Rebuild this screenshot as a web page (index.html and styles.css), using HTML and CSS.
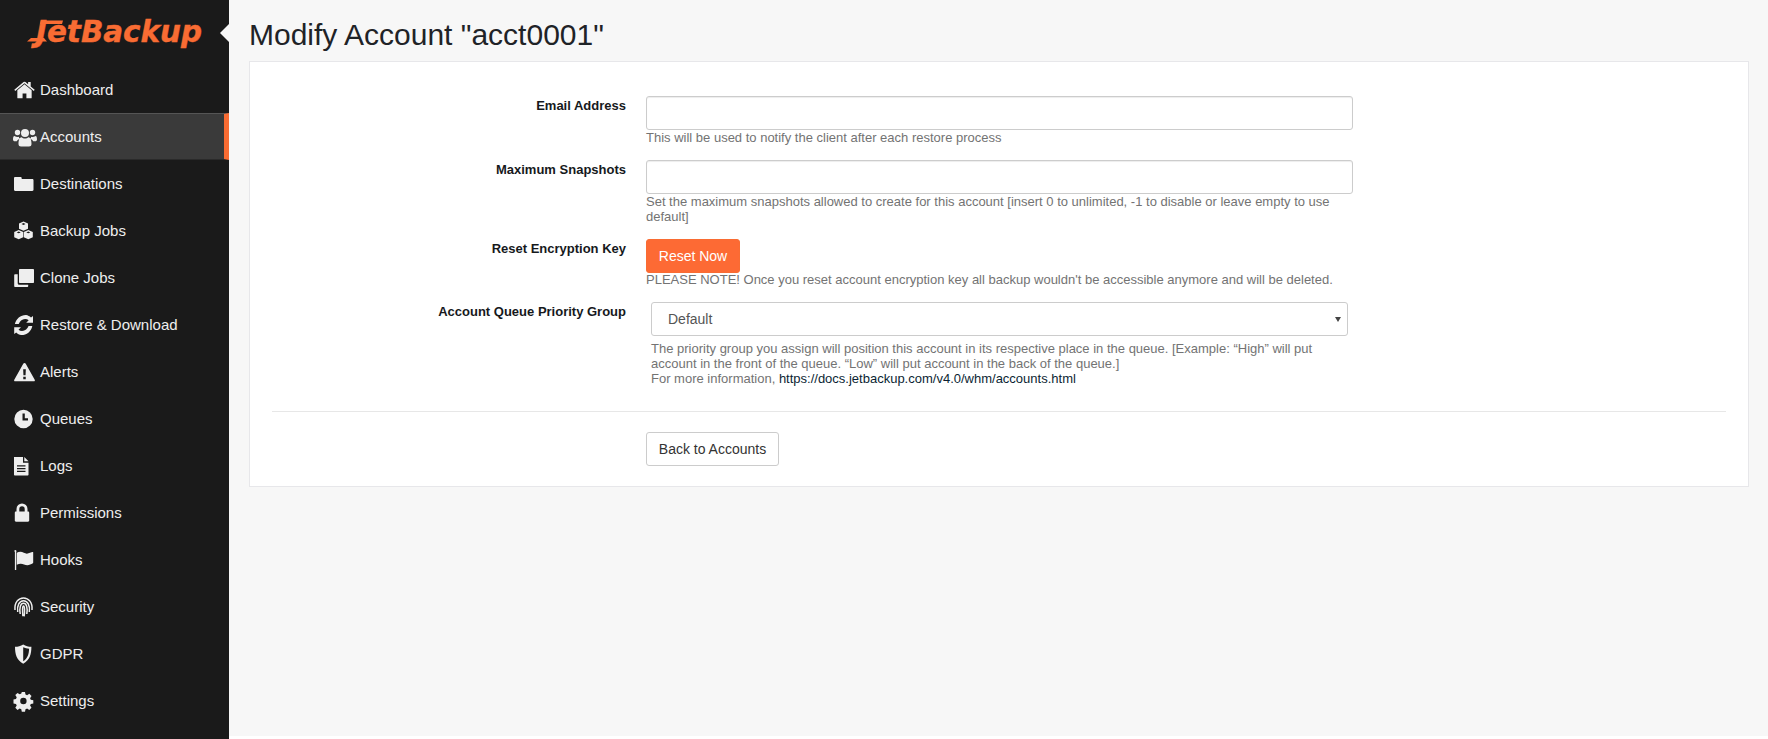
FILE: index.html
```html
<!DOCTYPE html>
<html lang="en">
<head>
<meta charset="utf-8">
<title>Modify Account</title>
<link rel="stylesheet" href="styles.css">
</head>
<body>
<div class="layout">
  <aside class="sidebar">
    <div class="brand">
      <svg class="logo" viewBox="0 0 176 30">
        <polygon class="logo-mark" points="0,21.500 20,21.500 17,18 4,18"/>
        <polygon class="logo-mark" points="14,.5 36,.5 35,4 13,4"/>
        <text class="logo-text" x="9" y="21.500" textLength="166" lengthAdjust="spacingAndGlyphs">JetBackup</text>
      </svg>
      <span class="notch"></span>
    </div>
    <nav class="nav">
      <a class="item"><svg class="ico ico-21" viewBox="0 0 22 20"><path d="M11 4 3.500 10.200V18a.7.7 0 0 0 .7.7H9v-5h4v5h4.800a.7.700 0 0 0 .7-.7v-7.800zM.3 9.800l1 1.200L11 3l9.700 8 1-1.200L17.500 6.300V1.500h-2.700v2.600L12 1.700a1.600 1.600 0 0 0-2 0z"/></svg>Dashboard</a>
      <a class="item active"><svg class="ico ico-24" viewBox="0 0 24 20"><circle cx="12" cy="6" r="4"/><circle cx="4.500" cy="5.500" r="2.700"/><circle cx="19.500" cy="5.500" r="2.700"/><path d="M5.500 17c0-4.500 1.500-6.700 3-6.700 1 .8 2.100 1.300 3.500 1.300s2.500-.5 3.500-1.300c1.500 0 3 2.200 3 6.700 0 1.700-1 2.500-2.500 2.500h-8c-1.500 0-2.500-.8-2.500-2.500zM0 12.500C0 10 .6 9 1.500 9c1 .6 2 .9 3 .9.500 0 1-.1 1.500-.2-.1 1 .3 1.600.9 2.200C5.300 12 4.300 13 3.800 14.300H1.800C.8 14.300 0 13.700 0 12.500zM24 12.500c0-2.500-.6-3.500-1.500-3.500-1 .6-2 .9-3 .9-.5 0-1-.1-1.500-.2.100 1-.3 1.600-.9 2.200 1.600.1 2.600 1.100 3.100 2.400h2c1 0 1.800-.6 1.800-1.800z"/></svg>Accounts</a>
      <a class="item"><svg class="ico" viewBox="0 0 20 20"><path d="M0 4.200C0 3.500.5 3 1.200 3h5.300c.7 0 1.200.5 1.200 1.200V5h10.600c.7 0 1.200.5 1.200 1.200v9.600c0 .7-.5 1.200-1.200 1.200H1.200C.5 17 0 16.500 0 15.800z"/></svg>Destinations</a>
      <a class="item"><svg class="ico" viewBox="0 0 20 20"><path fill-rule="evenodd" d="M9.500 .5 14 2.500V7.700L9.500 9.700 5 7.700V2.500zM7.500 3l2 .9 2-.9-2-.9zM4.700 9 9.200 11V16.300L4.700 18.300 .2 16.300V11zM2.700 11.400l2 .9 2-.9-2-.9zM14.300 9 18.800 11V16.300L14.300 18.300 9.800 16.300V11zM12.300 11.400l2 .9 2-.9-2-.9z"/></svg>Backup Jobs</a>
      <a class="item"><svg class="ico" viewBox="0 0 20 20"><path d="M5 1.800C5 1.300 5.300 1 5.800 1h13.400c.5 0 .8.300.8.800v12.400c0 .5-.3.800-.8.800H5.800c-.5 0-.8-.3-.8-.8z"/><path d="M.2 7C.2 6.500.5 6.200 1 6.200H3.700v9c0 .8.700 1.500 1.500 1.500h9v1.500c0 .5-.3.800-.8.800H1c-.5 0-.8-.3-.8-.8z"/></svg>Clone Jobs</a>
      <a class="item"><svg class="ico" viewBox="0 0 20 20"><path d="M19 1v6.800h-6.800l2.500-2.500C12.300 3.200 8.300 3.700 6 6.700c-.6.800-1 1.500-1.300 2.400H.9C1.900 3.600 6.800-.2 12-.1c1.900.3 3.600 1.200 5 2.500zM.2 19v-6.800h6.800L4.500 14.700c2.400 2.100 6.400 1.600 8.700-1.400.6-.8 1-1.500 1.300-2.400h3.800c-1 5.500-5.900 9.300-11.100 9.200-1.900-.3-3.600-1.200-5-2.500z"/></svg>Restore &amp; Download</a>
      <a class="item"><svg class="ico ico-21" viewBox="0 0 22 20"><path fill-rule="evenodd" d="M11 .5c.6 0 1 .3 1.300.8l9.400 16.700c.5 1 0 1.800-1 1.800H1.300c-1 0-1.500-.8-1-1.800L9.700 1.300C10 .8 10.400.5 11 .5zM9.600 7l.3 6.500h2.200L12.400 7zM9.700 15v2.500h2.600V15z"/></svg>Alerts</a>
      <a class="item"><svg class="ico" viewBox="0 0 20 20"><path fill-rule="evenodd" d="M9.500 .8a9.200 9.200 0 1 1 0 18.400 9.200 9.200 0 0 1 0-18.400zM8.500 4.500V11.500h5.500V9.300h-3.200V4.500z"/></svg>Queues</a>
      <a class="item"><svg class="ico" viewBox="0 0 20 20"><path fill-rule="evenodd" d="M0 1h9v5.700h5.500v12c0 .5-.3.800-.8.800H.8c-.5 0-.8-.3-.8-.8zM3 9.300v1.200h8.500V9.300zM3 12v1.200h8.500V12zM3 14.700v1.200h8.500v-1.200zM10.300 1l4.200 4.300h-4.200z"/></svg>Logs</a>
      <a class="item"><svg class="ico" viewBox="0 0 20 20"><path fill-rule="evenodd" d="M2.500 8.500V6a5.500 5.500 0 0 1 11 0v2.500h.5c.7 0 1.200.5 1.200 1.200v7.900c0 .7-.5 1.200-1.200 1.200H2c-.7 0-1.200-.5-1.200-1.200V9.700C.8 9 1.300 8.500 2 8.500zM5.300 8.500h5.400V6a2.700 2.700 0 0 0-5.400 0z"/></svg>Permissions</a>
      <a class="item"><svg class="ico" viewBox="0 0 20 20"><path d="M.9 0a1.200 1.200 0 0 1 1.300 1.900V20H.9V1.900A1.200 1.200 0 0 1 .9 0zM2.800 2.800c2.300-1.300 4.800-1.300 7 0 2 1.100 4 1.100 6.200 0 1.500-.7 3-1.100 3.200-.5v10.200c0 .5-.8 1.200-3 2.100-2.100.8-4.200.7-6.200-.2-2.300-1-5-.8-7.200.3z"/></svg>Hooks</a>
      <a class="item"><svg class="ico line" viewBox="0 0 20 20"><path d="M1 13C.2 5.500 4.500 .9 9.500.9S18.800 5.500 18 13M3.700 15c-1-6.500 1.800-11.300 5.800-11.300S16.300 8.500 15.300 15M6.200 17c-1-6.500.3-10.700 3.300-10.700S13.800 10.500 12.800 17M8.900 19.300c-.5-5-.6-10.300.6-10.300s1.400 5.300.6 10.300"/></svg>Security</a>
      <a class="item"><svg class="ico" viewBox="0 0 20 20"><path fill-rule="evenodd" d="M9.200 .5c2.500 1.500 5.200 2.300 8.200 2.300 0 7.500-1.600 13.300-8.200 17C2.600 16.100 1 10.300 1 2.800c3 0 5.700-.8 8.200-2.300zM9.200 3.300v13.900c4.300-2.800 5.700-6.800 5.900-12.500-2.100-.2-4-.6-5.900-1.400z"/></svg>GDPR</a>
      <a class="item"><svg class="ico" viewBox="0 0 20 20"><path fill-rule="evenodd" d="M7.800 1h3.200l.5 2.500 1.600.7 2.200-1.400 2.200 2.200-1.400 2.200.7 1.600 2.500.5v3.200l-2.500.5-.7 1.600 1.400 2.200-2.200 2.200-2.200-1.400-1.600.7-.5 2.500H7.800l-.5-2.500-1.600-.7-2.200 1.400-2.200-2.200 1.400-2.200-.7-1.600-2.500-.5V8.400l2.500-.5.7-1.600-1.400-2.200 2.200-2.200 2.200 1.400 1.600-.7zM9.400 6.800a3.200 3.200 0 1 0 0 6.400 3.200 3.200 0 0 0 0-6.400z"/></svg>Settings</a>
    </nav>
  </aside>
  <main class="main">
    <h1 class="title">Modify Account "acct0001"</h1>
    <section class="panel">
      <div class="row row-email">
        <label class="label">Email Address</label>
        <div class="control"><input class="input" type="text"><p class="help">This will be used to notify the client after each restore process</p></div>
      </div>
      <div class="row row-snap">
        <label class="label">Maximum Snapshots</label>
        <div class="control"><input class="input" type="text"><p class="help">Set the maximum snapshots allowed to create for this account [insert 0 to unlimited, -1 to disable or leave empty to use default]</p></div>
      </div>
      <div class="row row-reset">
        <label class="label">Reset Encryption Key</label>
        <div class="control"><button class="btn btn-primary" type="button">Reset Now</button><p class="help help-reset">PLEASE NOTE! Once you reset account encryption key all backup wouldn't be accessible anymore and will be deleted.</p></div>
      </div>
      <div class="row row-queue">
        <label class="label">Account Queue Priority Group</label>
        <div class="control inset">
          <div class="select"><span>Default</span><span class="caret"></span></div>
          <p class="help help-queue">The priority group you assign will position this account in its respective place in the queue. [Example: “High” will put account in the front of the queue. “Low” will put account in the back of the queue.]<br>For more information, <a class="link">https://docs.jetbackup.com/v4.0/whm/accounts.html</a></p>
        </div>
      </div>
      <hr class="rule">
      <div class="row row-back">
        <div class="label"></div>
        <div class="control"><button class="btn btn-default" type="button">Back to Accounts</button></div>
      </div>
    </section>
  </main>
</div>
</body>
</html>
```
FILE: styles.css
```css
* { box-sizing: border-box; }
html, body { margin: 0; height: 100%; background: #fff; }
body {
  font-family: "Liberation Sans", Arial, sans-serif;
  color: #1f2327;
  overflow: hidden;
}
.layout { display: flex; height: 739px; align-items: stretch; }
.sidebar { width: 229px; flex: none; background: #1a1a1a; color: #eee; }
.brand { position: relative; height: 66px; padding: 20px 0 0 27px; }
.logo { display: block; width: 176px; height: 30px; overflow: visible; }
.logo-mark { fill: #f96c33; }
.logo-text {
  font: italic 700 30px "DejaVu Sans", sans-serif;
  fill: #f96c33;
  stroke: #f96c33;
  stroke-width: .4px;
}
.notch {
  position: absolute; right: 0; top: 24px;
  border: 9px solid transparent; border-right-color: #f7f7f7; border-left-width: 0;
}
.nav { display: flex; flex-direction: column; }
.item {
  display: flex; align-items: center;
  height: 47px; padding-left: 14px;
  font-size: 15px; color: #eee;
}
.item.active {
  background: #3a3a3a;
  border-top: 1px solid #555;
  border-bottom: 1px solid #2a2a2a;
  border-right: 5px solid #f96c33;
}
.ico { width: 20px; height: 20px; margin-right: 6px; fill: #eee; flex: none; overflow: visible; }
.ico-21 { width: 21px; margin-right: 5px; }
.ico-24 { width: 24px; margin-left: -1px; margin-right: 3px; }
.ico.line { fill: none; stroke: #eee; stroke-width: 1.500; }
.main { flex: 1; height: 736px; background: #f7f7f7; padding: 0 19px 0 20px; min-width: 0; }
.title { margin: 0; height: 61px; font-size: 30px; font-weight: 400; line-height: 69px; color: #1f2327; }
.panel { background: #fff; border: 1px solid #e7e7ea; height: 426px; padding: 34px 22px 0; }
.row { display: grid; grid-template-columns: 354px 707px; column-gap: 20px; }
.row-email { height: 64px; }
.row-snap { height: 79px; }
.row-reset { height: 63px; }
.row-queue { height: 109px; }
.label { text-align: right; font-size: 13px; font-weight: 700; line-height: 18px; padding-top: 1px; color: #16191c; }
.control.inset { padding: 0 5px; }
.input { display: block; width: 100%; height: 34px; border: 1px solid #ccc; border-radius: 3px; background: #fff; box-shadow: inset 0 1px 1px rgba(0,0,0,.075); }
.help { margin: 0; font-size: 13px; line-height: 15px; color: #737373; }
.help-reset { margin-top: -1px; }
.help-queue { padding-top: 5px; }
.link { color: #0b1f33; }
.btn { display: block; height: 34px; font: 14px "Liberation Sans", sans-serif; border-radius: 3px; padding: 0; white-space: nowrap; text-align: center; }
.btn-primary { width: 94px; background: #fd6a34; border: 1px solid #f96c33; color: #fff; }
.btn-default { width: 133px; background: #fff; border: 1px solid #ccc; color: #333; }
.select { display: flex; justify-content: space-between; align-items: center; height: 34px; border: 1px solid #ccc; border-radius: 3px; padding: 0 6px 0 16px; font-size: 14px; color: #555; }
.caret { width: 0; height: 0; border-left: 3px solid transparent; border-right: 3px solid transparent; border-top: 5px solid #444; }
.rule { border: 0; border-top: 1px solid #e7e7e7; margin: 0 0 20px; }
```
